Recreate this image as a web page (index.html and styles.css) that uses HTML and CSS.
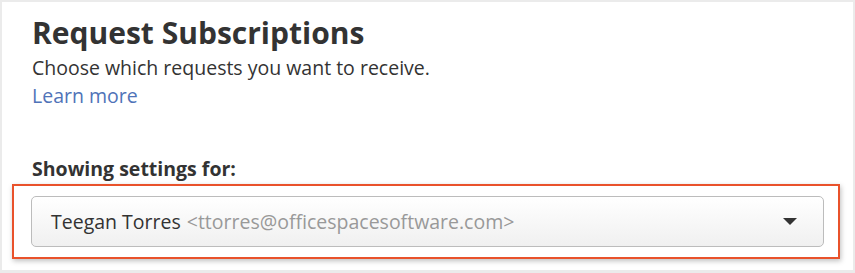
FILE: index.html
```html
<!DOCTYPE html>
<html lang="en">
<head>
  <meta charset="UTF-8">
  <title>Request Subscriptions</title>
  <link rel="stylesheet" href="styles.css">
</head>
<body>

  <div class="panel">
    <h1>Request Subscriptions</h1>
    <p class="intro">Choose which requests you want to receive.</p>
    <a class="learn" href="#">Learn more</a>

    <div class="label">Showing settings for:</div>

    <!-- highlighted selector -->
    <div class="highlight">
      <div class="select">
        <span class="name">Teegan Torres</span>
        <span class="email">&lt;ttorres@officespacesoftware.com&gt;</span>
        <svg class="caret" width="14" height="7" viewBox="0 0 14 7"><path d="M0 0H14L7 7Z" fill="#333"/></svg>
      </div>
    </div>
  </div>

</body>
</html>
```

FILE: styles.css
```css
html, body {
  margin: 0;
  padding: 0;
  background: #ebebeb;
  font-family: 'Open Sans', 'Liberation Sans', sans-serif;
  color: #333;
}

.panel {
  margin: 2px 2px 3px 2px;
  background: #fff;
  height: 255px;
  padding: 13px 0 0 0;
  display: flex;
  flex-direction: column;
}

h1 {
  margin: 0 0 0 30px;
  font-size: 30px;
  line-height: 36px;
  font-weight: bold;
  color: #333;
}

.intro {
  margin: 3px 0 0 30px;
  font-size: 19.5px;
  line-height: 28px;
}

.learn {
  margin-left: 30px;
  font-size: 19.5px;
  line-height: 28px;
  color: #4f73b8;
  text-decoration: none;
  align-self: flex-start;
}

.label {
  margin: 45px 0 0 30px;
  font-size: 19.5px;
  line-height: 28px;
  font-weight: bold;
}

.highlight {
  margin: 1px 0 0 10px;
  width: 828px;
  border: 2px solid #e9522b;
  padding: 10px 14px 10px 17px;
  box-sizing: border-box;
  box-shadow: 1px 2px 5px rgba(0,0,0,0.25);
}

.select {
  height: 51px;
  box-sizing: border-box;
  border: 1px solid #bcbcbc;
  border-radius: 5px;
  background: linear-gradient(#fff, #f0f0f0);
  display: flex;
  align-items: center;
  padding: 0 26px 0 19px;
  font-size: 19.5px;
}

.name {
  color: #333;
}

.email {
  color: #999;
  margin-left: 6px;
}

.caret {
  margin-left: auto;
}
```
